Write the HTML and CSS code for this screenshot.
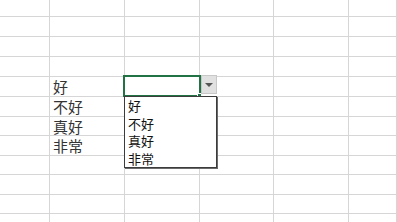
FILE: index.html
```html
<!DOCTYPE html>
<html lang="zh-CN">

<head>
    <meta charset="UTF-8">
    <meta name="viewport" content="width=device-width, initial-scale=1.0">
    <title>数据验证下拉列表</title>
    <link rel="stylesheet" href="styles.css">
</head>

<body>
    <div class="sheet-wrap">
        <div class="sheet">
            <div class="cell"></div><div class="cell"></div><div class="cell"></div><div class="cell"></div><div class="cell"></div><div class="cell"></div>
            <div class="cell"></div><div class="cell"></div><div class="cell"></div><div class="cell"></div><div class="cell"></div><div class="cell"></div>
            <div class="cell"></div><div class="cell"></div><div class="cell"></div><div class="cell"></div><div class="cell"></div><div class="cell"></div>
            <div class="cell"></div><div class="cell"></div><div class="cell"></div><div class="cell"></div><div class="cell"></div><div class="cell"></div>
            <div class="cell"></div><div class="cell">好</div><div class="cell"></div><div class="cell"></div><div class="cell"></div><div class="cell"></div>
            <div class="cell"></div><div class="cell">不好</div><div class="cell"></div><div class="cell"></div><div class="cell"></div><div class="cell"></div>
            <div class="cell"></div><div class="cell">真好</div><div class="cell"></div><div class="cell"></div><div class="cell"></div><div class="cell"></div>
            <div class="cell"></div><div class="cell">非常</div><div class="cell"></div><div class="cell"></div><div class="cell"></div><div class="cell"></div>
            <div class="cell"></div><div class="cell"></div><div class="cell"></div><div class="cell"></div><div class="cell"></div><div class="cell"></div>
            <div class="cell"></div><div class="cell"></div><div class="cell"></div><div class="cell"></div><div class="cell"></div><div class="cell"></div>
            <div class="cell"></div><div class="cell"></div><div class="cell"></div><div class="cell"></div><div class="cell"></div><div class="cell"></div>
            <div class="cell"></div><div class="cell"></div><div class="cell"></div><div class="cell"></div><div class="cell"></div><div class="cell"></div>
        </div>

        <!-- active cell C5 with its validation dropdown -->
        <div class="active-cell">
            <span class="fill-handle"></span>
        </div>
        <div class="dropdown-btn">
            <span class="arrow"></span>
        </div>
        <ul class="dropdown-list">
            <li>好</li>
            <li>不好</li>
            <li>真好</li>
            <li>非常</li>
        </ul>
    </div>
</body>

</html>
```

FILE: styles.css
```css
:root {
    --grid-line: #d6d6d6;
    --excel-green: #217346;
    --text-color: #333333;
}

* {
    box-sizing: border-box;
    margin: 0;
    padding: 0;
}

body {
    background-color: #ffffff;
    font-family: 'Noto Sans CJK SC', 'Noto Sans', sans-serif;
    overflow: hidden;
}

.sheet-wrap {
    position: relative;
    width: 397px;
    height: 222px;
}

.sheet {
    display: grid;
    grid-template-columns: 50px 75px 75px 74px 75px 48px;
    grid-template-rows: 17px 20px 20px 20px 20px 20px 19px 20px 19px 20px 19px 9px;
}

.cell {
    border-right: 1px solid var(--grid-line);
    border-bottom: 1px solid var(--grid-line);
    color: var(--text-color);
    font-size: 15px;
    line-height: 19px;
    padding-left: 3px;
    white-space: nowrap;
}

.active-cell {
    position: absolute;
    left: 123px;
    top: 75px;
    width: 78px;
    height: 22px;
    border: 2px solid var(--excel-green);
}

.fill-handle {
    position: absolute;
    right: -3px;
    bottom: -3px;
    width: 5px;
    height: 5px;
    background-color: var(--excel-green);
    border: 1px solid #ffffff;
}

.dropdown-btn {
    position: absolute;
    left: 201px;
    top: 75px;
    width: 16px;
    height: 19px;
    background-color: #e1e1e1;
    border: 1px solid #c8c8c8;
    display: flex;
    justify-content: center;
    align-items: center;
}

.arrow {
    width: 0;
    height: 0;
    border-left: 4px solid transparent;
    border-right: 4px solid transparent;
    border-top: 4px solid #555555;
}

.dropdown-list {
    position: absolute;
    left: 124px;
    top: 96px;
    width: 93px;
    height: 72px;
    list-style: none;
    background-color: #ffffff;
    border: 1px solid #3c3c3c;
    box-shadow: 1px 1px 0 #6a6a6a;
}

.dropdown-list li {
    font-size: 13px;
    line-height: 17.5px;
    padding-left: 3px;
    color: #111111;
}
```
